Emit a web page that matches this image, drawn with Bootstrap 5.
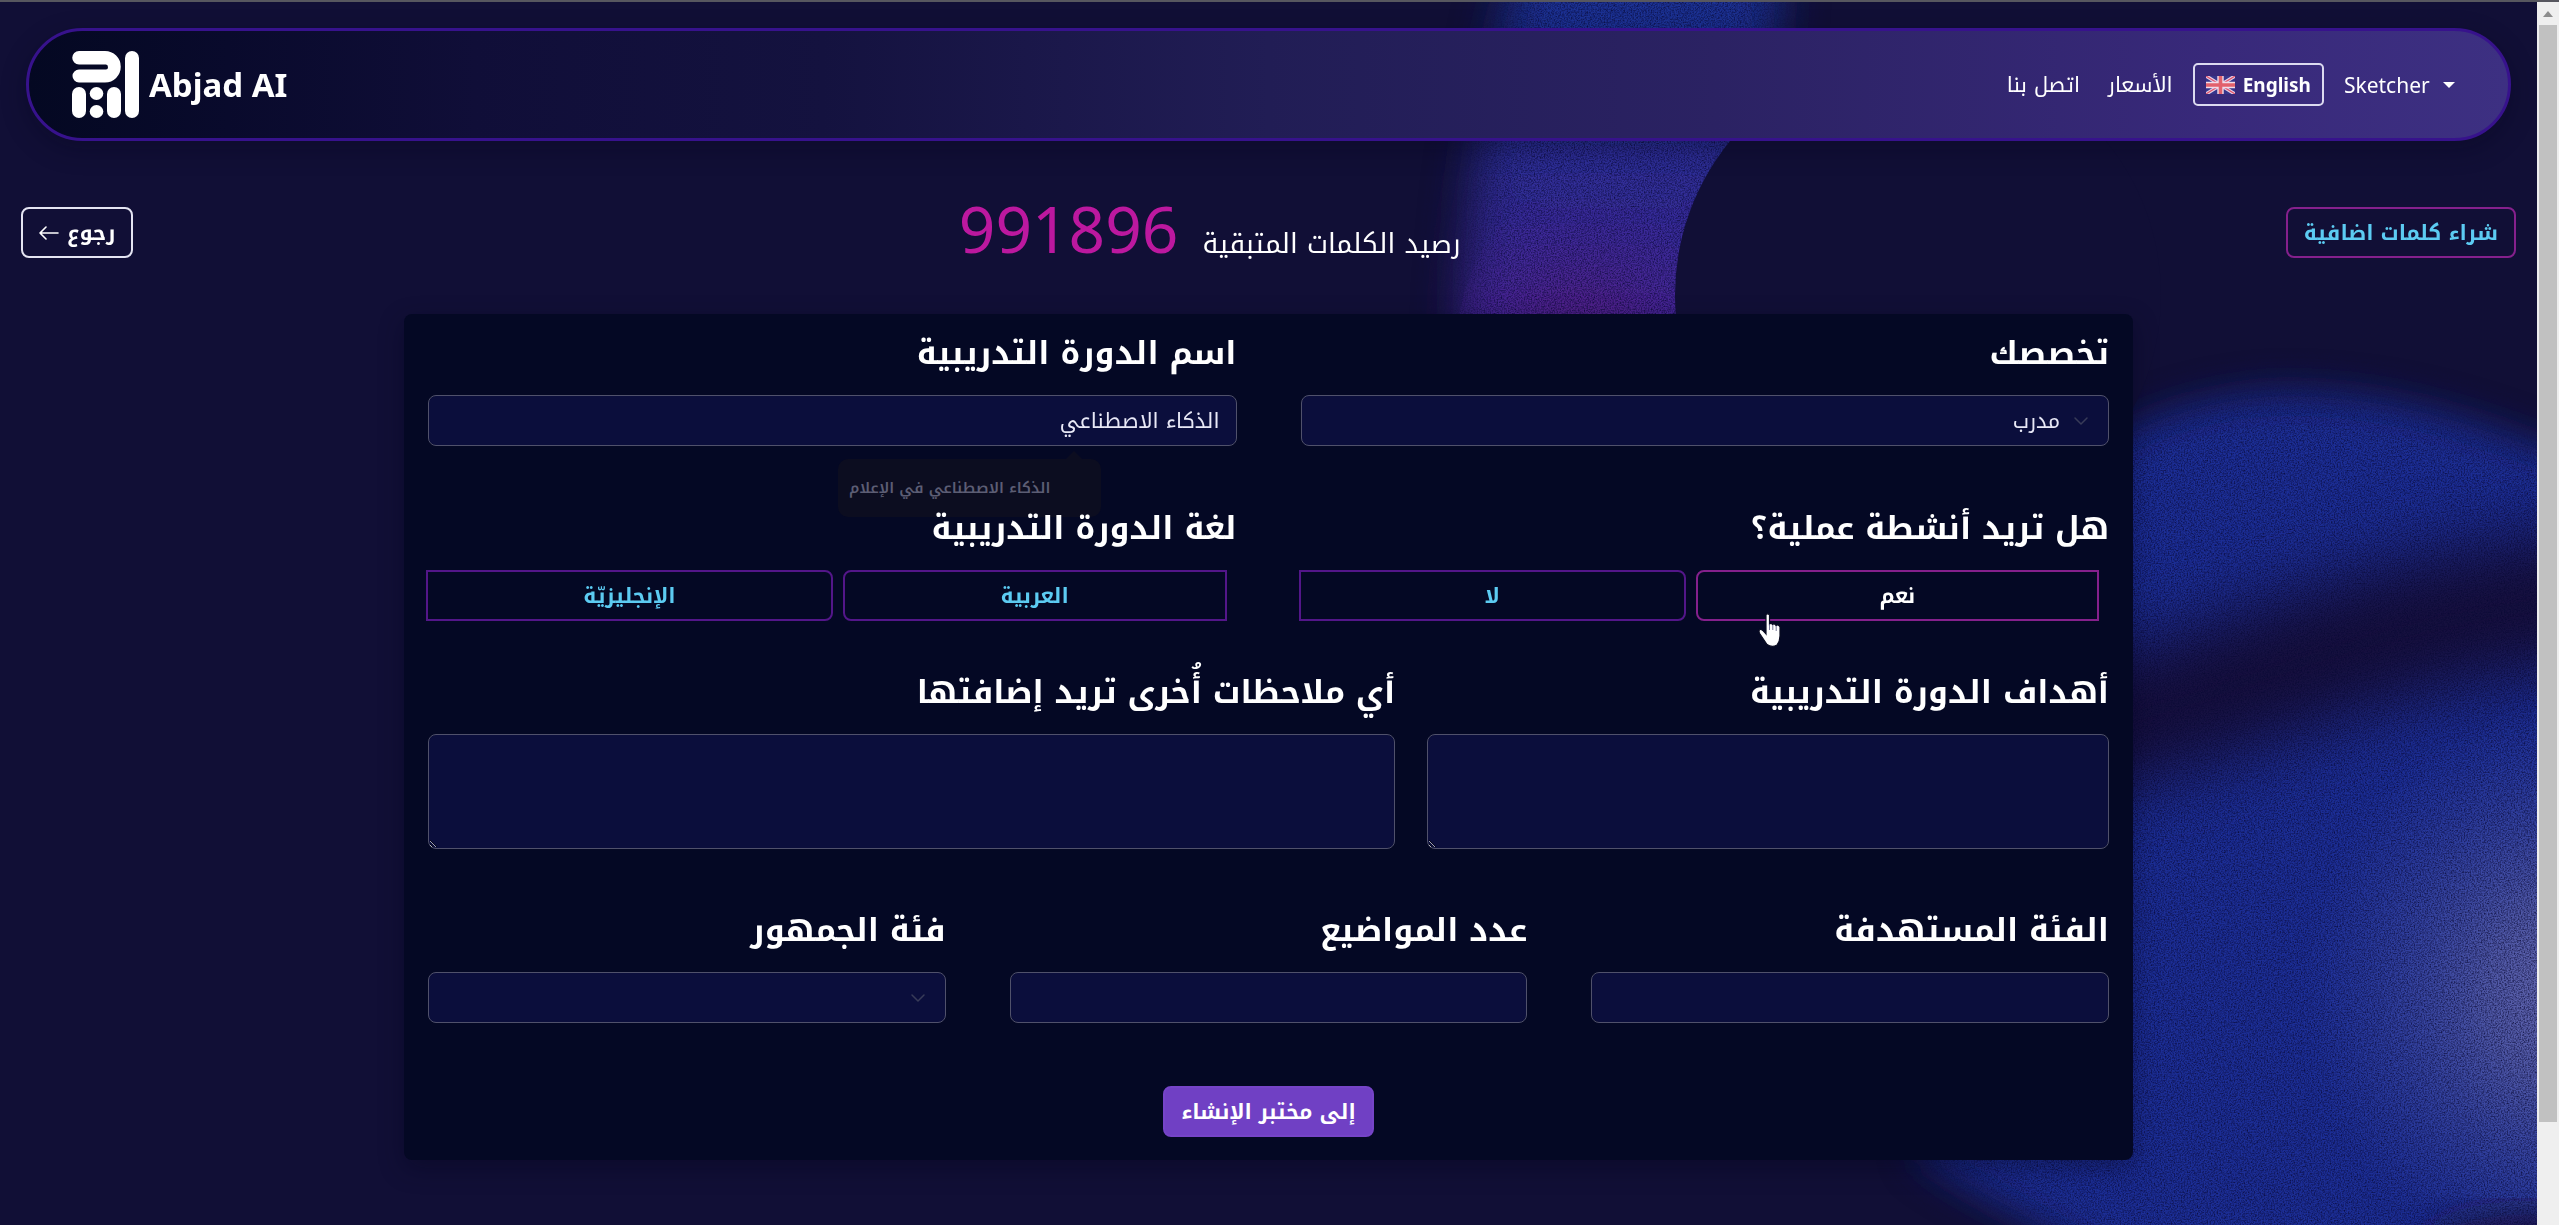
<!DOCTYPE html>
<html lang="ar" dir="rtl">
<head>
<meta charset="utf-8">
<title>Abjad AI</title>
<meta name="viewport" content="width=device-width, initial-scale=1">
<link rel="stylesheet" href="https://cdn.jsdelivr.net/npm/bootstrap@5.3.0/dist/css/bootstrap.min.css">
<style>
body{background:#110f36;color:#fff;font-family:"Noto Kufi Arabic","Noto Sans",sans-serif;font-size:21px;line-height:32px;overflow:hidden}
.latin{font-family:"Noto Sans",sans-serif}
.shell{min-height:100vh;border-top:2px solid #57575f}
.page{min-width:0;padding:26px 0 0}
.backdrop{position:absolute;inset:0;width:100%;height:100%}
.topbar{margin:0 26px 66px;min-height:113px;padding:0 53px 0 43px;border:3px solid #37128c;border-radius:57px;background:linear-gradient(90deg,#040822 0,#090a2c 8%,#100e38 18%,#14123f 32%,#211d55 50%,#2b2263 68%,#38297a 88%,#3d3082 100%);box-shadow:0 8px 24px rgba(5,6,30,.35)}
.topbar a{color:#fff;text-decoration:none}
.brand-link{gap:10px}
.logo{width:67px;height:67px}
.brand-name{font-size:33px;line-height:44px;font-weight:700}
.lang-btn{height:43px;margin:0 20px;padding:0 11px;border:2px solid #dcdaf0;border-radius:5px;color:#fff;font-size:19px;font-weight:700;line-height:32px}
.flag{width:29px;height:18px}
.nav-gap{margin-left:28px}
.act{height:51px;padding:0 16px;border:2px solid #85208c;border-radius:8px;color:#5ccbf2;font-size:21px;font-weight:700;line-height:32px}
.act:hover{color:#fff;border-color:#b0269f}
.act-back{border-color:#e4e4f2;color:#fff}
.toolrow{padding:0 21px;margin-bottom:48px}
.credit-label{font-size:27px;line-height:44px}
.credit-num{font-size:64px;line-height:44px;color:#bc189f}
.panel{width:1729px;max-width:96%;margin:0 auto 40px;padding:20px 24px 23px;border-radius:8px;background:#040824;box-shadow:0 8px 24px rgba(5,6,30,.4)}
.r-wide{--bs-gutter-x:64px;margin-bottom:63px}
.r-mid{--bs-gutter-x:64px;margin-bottom:52px;position:relative;z-index:1}
.r-tight{--bs-gutter-x:32px;margin-bottom:62px}
.q{display:block;margin:0 0 21px;font-size:32px;line-height:40px;font-weight:700}
.field,.field:focus{background-color:#0b0e3c;border:1px solid #50516b;border-radius:8px;color:#e8e8f6;font-size:21px;line-height:32px;height:51px;padding:0 16px}
.area,.area:focus{height:115px;resize:vertical}
.pick,.pick:focus{padding:0 48px 0 16px;background-image:url("data:image/svg+xml,%3csvg xmlns='http://www.w3.org/2000/svg' viewBox='0 0 16 16'%3e%3cpath fill='none' stroke='%23383b58' stroke-linecap='round' stroke-linejoin='round' stroke-width='1.5' d='m2 5 6 6 6-6'/%3e%3c/svg%3e");background-repeat:no-repeat;background-position:right 18px center;background-size:18px 16px}
.choices{gap:10px;padding-right:10px;margin-left:-2px}
.choice{border-color:#531689;padding:0}
.choice-a{border-radius:8px 0 0 8px}
.choice-b{border-radius:0 8px 8px 0}
.choice-on{border-color:#85208c;color:#fff}
.g-406{flex:406 1 0}.g-386{flex:386 1 0}.g-383{flex:383 1 0}
.hand{position:absolute;left:61px;top:42px;width:26px;height:36px;z-index:3}
.hint{position:absolute;top:125px;right:168px;width:263px;height:58px;padding:13px 50px 0 14px;border-radius:10px;background:#0c0d20;color:#5c5d74;font-size:15px;font-weight:600;line-height:32px;white-space:nowrap}
.hint::before{content:"";position:absolute;top:-8px;right:18px;border:9px solid transparent;border-top:0;border-bottom-color:#0c0d20}
.go{background:#7040c4;border-color:#7644c8;color:#fff}
.rail{width:22px;flex:none;background:#efefef;height:calc(100vh - 2px)}
.rail-cap{height:23px}
.rail-thumb{flex:1097;background:#c1c1c1;margin:0 2px}
.rail-rest{flex:103}
</style>
</head>
<body>
<div class="shell d-flex" dir="ltr">
<div class="page flex-grow-1 position-relative" dir="rtl">

<svg class="backdrop" viewBox="0 0 2537 1223" preserveAspectRatio="xMaxYMin slice" aria-hidden="true">
  <defs>
    <filter id="soft" x="-20%" y="-20%" width="140%" height="140%"><feGaussianBlur stdDeviation="20"/></filter>
    <filter id="softer" x="-40%" y="-20%" width="180%" height="140%"><feGaussianBlur stdDeviation="24"/></filter>
    <filter id="band" x="-20%" y="-80%" width="140%" height="260%" color-interpolation-filters="sRGB"><feGaussianBlur stdDeviation="34"/></filter>
    <filter id="grain" filterUnits="userSpaceOnUse" x="0" y="0" width="2537" height="1223" color-interpolation-filters="sRGB">
      <feTurbulence type="fractalNoise" baseFrequency=".7" numOctaves="2" seed="4" result="n"/>
      <feColorMatrix in="n" type="matrix" values="0 0 0 0 .03  0 0 0 0 .03  0 0 0 0 .2  1.6 0 0 0 -.6" result="d"/>
      <feComposite in="d" in2="SourceAlpha" operator="in" result="dd"/>
      <feMerge><feMergeNode in="SourceGraphic"/><feMergeNode in="dd"/></feMerge>
    </filter>
    <linearGradient id="g1" x1="0" y1="0" x2="0" y2="320" gradientUnits="userSpaceOnUse">
      <stop offset="0" stop-color="#1b3394"/><stop offset=".4" stop-color="#2a3097"/><stop offset="1" stop-color="#43279a"/>
    </linearGradient>
    <radialGradient id="g2" cx="1580" cy="355" r="170" gradientUnits="userSpaceOnUse">
      <stop offset="0" stop-color="#581c80"/><stop offset=".4" stop-color="#521e84" stop-opacity=".6"/><stop offset="1" stop-color="#43279a" stop-opacity="0"/>
    </radialGradient>
    <radialGradient id="g3" cx="2590" cy="990" r="290" gradientUnits="userSpaceOnUse">
      <stop offset="0" stop-color="#6f70b4"/><stop offset=".35" stop-color="#5c62aa" stop-opacity=".8"/><stop offset="1" stop-color="#3c4ba8" stop-opacity="0"/>
    </radialGradient>
  </defs>
  <g filter="url(#grain)">
    <path filter="url(#softer)" fill="url(#g1)" d="M1535-80H1765Q1785 0 1765 60L1720 420H1466Q1458 150 1535-80Z"/>
    <ellipse cx="1580" cy="355" rx="125" ry="170" fill="url(#g2)"/>
    <path filter="url(#soft)" fill="#1d2f96" d="M2000 530C2090 425 2210 394 2290 394C2400 396 2500 425 2660 500V1215C2540 1212 2500 1240 2450 1300H2170C2050 1220 1970 1190 1920 1150Z"/>
    <path filter="url(#band)" fill="none" stroke="#160f3b" stroke-width="135" d="M2020 735C2220 718 2330 610 2660 590"/>
    <path fill="url(#g3)" d="M2300 700H2537V1223H2300Z"/>
    <ellipse filter="url(#soft)" cx="2530" cy="1250" rx="110" ry="38" fill="#1a1445"/>
  </g>
  <circle cx="1918" cy="293" r="243" fill="#110f36"/>
</svg>

<div class="position-relative">
<nav class="topbar d-flex align-items-center justify-content-between">
  <div class="d-flex align-items-center">
    <div class="dropdown"><a href="#" class="dropdown-toggle latin d-flex align-items-center gap-2" dir="ltr" data-bs-toggle="dropdown">Sketcher</a></div>
    <button type="button" class="btn lang-btn latin d-flex align-items-center" dir="ltr">
      <svg class="flag me-2" viewBox="0 0 29 18" aria-hidden="true"><path fill="#35358c" d="M0 0h29v18H0z"/><path stroke="#e6cfe6" stroke-width="3.600" d="m0 0 29 18M29 0 0 18"/><path stroke="#e0536a" stroke-width="1.200" d="m0 0 29 18M29 0 0 18"/><path stroke="#f0dcea" stroke-width="6.400" d="M14.500 0v18M0 9h29"/><path stroke="#e2606c" stroke-width="3.600" d="M14.500 0v18M0 9h29"/></svg>English</button>
    <a href="#" class="nav-gap">الأسعار</a>
    <a href="#">اتصل بنا</a>
  </div>
  <a href="#" class="brand-link d-flex align-items-center latin" dir="ltr">
    <svg class="logo" viewBox="0 0 67 67" aria-hidden="true"><g fill="#fff"><path d="M7 0H33A15.500 15.500 0 0 1 33 31.500H7A6.500 6.500 0 0 1 7 18.500H34Q36 18.500 36 16.200T34 13.500H7A6.500 6.500 0 0 1 7 0Z"/><rect x="53" width="14" height="67" rx="7"/><rect y="36" width="14" height="31" rx="7"/><rect x="35" y="36" width="14" height="31" rx="7"/><ellipse cx="24.500" cy="42.500" rx="6.800" ry="6.500"/><ellipse cx="24.500" cy="60.500" rx="6.800" ry="6.500"/></g></svg>
    <span class="brand-name">Abjad AI</span>
  </a>
</nav>

<div class="toolrow d-flex justify-content-between align-items-start">
  <button type="button" class="btn act">شراء كلمات اضافية</button>
  <div class="d-flex align-items-baseline gap-4"><span class="credit-label">رصيد الكلمات المتبقية</span><span class="credit-num latin">991896</span></div>
  <button type="button" class="btn act act-back d-flex align-items-center gap-2">رجوع
    <svg width="20" height="14" viewBox="0 0 20 14" fill="none" stroke="#fff" stroke-width="1.600" stroke-linecap="round" stroke-linejoin="round" aria-hidden="true"><path d="M19 7H1M7 1 1 7l6 6"/></svg></button>
</div>

<form class="panel">
  <div class="row r-wide">
    <div class="col-6"><label class="q" for="spec">تخصصك</label>
      <select id="spec" class="form-select field pick"><option>مدرب</option></select></div>
    <div class="col-6 position-relative"><label class="q" for="course">اسم الدورة التدريبية</label>
      <input id="course" type="text" class="form-control field" value="الذكاء الاصطناعي">
      <div class="hint">الذكاء الاصطناعي في الإعلام</div></div>
  </div>
  <div class="row r-mid">
    <div class="col-6"><div class="q" id="q-act">هل تريد أنشطة عملية؟</div>
      <div class="choices d-flex" role="group" aria-labelledby="q-act">
        <div class="g-406 position-relative d-flex"><button type="button" class="btn act choice choice-a choice-on flex-fill">نعم</button>
          <svg class="hand" viewBox="0 0 26 36" aria-hidden="true"><path fill="#fff" stroke="#0a0c22" stroke-width="1.200" d="M9 2.500Q11 1 12.500 3V12Q14 10.500 15.500 12.500Q17.500 11 19 13.500Q21.500 12 23 15V24Q23 29 20 33Q15 36 10 32.500L3 22Q1 18.500 3 17.500Q5 17 9 22Z"/><path stroke="#55577a" stroke-width=".8" d="M12.500 12v6M15.800 13v5M19.200 14v5"/></svg></div>
        <button type="button" class="btn act choice choice-b g-386">لا</button>
      </div></div>
    <div class="col-6"><div class="q" id="q-lang">لغة الدورة التدريبية</div>
      <div class="choices d-flex" role="group" aria-labelledby="q-lang">
        <button type="button" class="btn act choice choice-a g-383">العربية</button>
        <button type="button" class="btn act choice choice-b g-406">الإنجليزيّة</button>
      </div></div>
  </div>
  <div class="row r-tight">
    <div class="col-5"><label class="q" for="goals">أهداف الدورة التدريبية</label><textarea id="goals" class="form-control field area"></textarea></div>
    <div class="col-7"><label class="q" for="notes">أي ملاحظات أُخرى تريد إضافتها</label><textarea id="notes" class="form-control field area"></textarea></div>
  </div>
  <div class="row r-wide">
    <div class="col-4"><label class="q" for="target">الفئة المستهدفة</label><input id="target" type="text" class="form-control field"></div>
    <div class="col-4"><label class="q" for="topics">عدد المواضيع</label><input id="topics" type="text" class="form-control field"></div>
    <div class="col-4"><label class="q" for="crowd">فئة الجمهور</label><select id="crowd" class="form-select field pick"><option></option></select></div>
  </div>
  <div class="text-center"><button type="submit" class="btn act go">إلى مختبر الإنشاء</button></div>
</form>
</div>
</div>
<div class="rail d-flex flex-column" aria-hidden="true">
  <div class="rail-cap d-flex align-items-center justify-content-center"><svg width="10" height="6" viewBox="0 0 10 6"><path d="M5 0l5 6H0z" fill="#8d8d8d"/></svg></div>
  <div class="rail-thumb"></div><div class="rail-rest"></div>
</div>
</div>
<script src="https://cdn.jsdelivr.net/npm/bootstrap@5.3.0/dist/js/bootstrap.bundle.min.js"></script>
</body>
</html>
